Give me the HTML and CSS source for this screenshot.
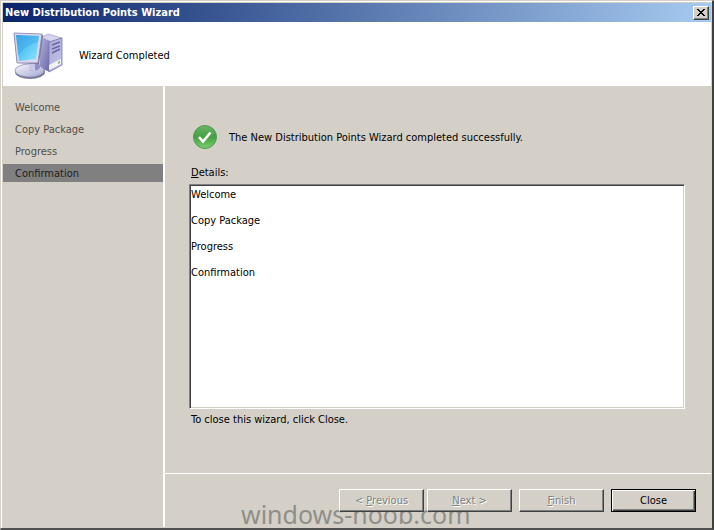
FILE: index.html
```html
<!DOCTYPE html>
<html lang="en">
<head>
<meta charset="utf-8">
<title>New Distribution Points Wizard</title>
<link rel="stylesheet" href="styles.css">
</head>
<body>
<div class="window">
  <div class="titlebar">
    <h1 class="title">New Distribution Points Wizard</h1>
    <button class="close-box" type="button" aria-label="Close window">
      <svg width="8" height="7" viewBox="0 0 8 7" shape-rendering="crispEdges"><path d="M0 0h2v1h1v1h2v-1h1v-1h2v1h-1v1h-1v1h-1v1h1v1h1v1h1v1h-2v-1h-1v-1h-2v1h-1v1h-2v-1h1v-1h1v-1h1v-1h-1v-1h-1v-1h-1z"/></svg>
    </button>
  </div>
  <header class="banner">
    <svg class="computer" width="52" height="50" viewBox="0 0 52 50" aria-hidden="true">
      <defs>
        <linearGradient id="screen" x1="0" y1="0" x2="1" y2="1"><stop offset="0" stop-color="#3fa6e2"/><stop offset=".5" stop-color="#5cc8f4"/><stop offset="1" stop-color="#8ce8ff"/></linearGradient>
        <linearGradient id="side" x1="0" y1="0" x2="1" y2="1"><stop offset="0" stop-color="#b3b3da"/><stop offset="1" stop-color="#6663a8"/></linearGradient>
        <linearGradient id="front" x1="0" y1="0" x2="1" y2="1"><stop offset="0" stop-color="#a9aad9"/><stop offset="1" stop-color="#c3c4e6"/></linearGradient>
        <linearGradient id="base" x1="0" y1="0" x2="1" y2="1"><stop offset="0" stop-color="#f7f7ff"/><stop offset="1" stop-color="#a5a5d1"/></linearGradient>
      </defs>
      <path d="M29 6l6-3 14 4-12 4z" fill="#d5d6ec" stroke="#8e8fbc" stroke-width=".6"/>
      <path d="M27 6l10 4v31l-10-4z" fill="url(#side)"/>
      <path d="M36 11l13-4v27l-13 7z" fill="url(#front)" stroke="#7776ae" stroke-width=".8"/>
      <path d="M39 14l8-3M39 18l8-3M39 22l8-4" stroke="#6865aa" stroke-width="1.500"/>
      <path d="M36 34l12-6v5l-12 6z" fill="#f1f2fc"/>
      <path d="M45 31l2-1v2l-2 1z" fill="#7fb35d"/>
      <ellipse cx="17" cy="41" rx="15" ry="7" fill="#77769f"/>
      <ellipse cx="16.500" cy="39.500" rx="14.500" ry="6.500" fill="url(#base)" stroke="#9392bb" stroke-width=".8"/>
      <path d="M16 28l10-1 1 10q-5 5-11 2z" fill="#8f8dca"/>
      <path d="M16 28l6-1v13q-3 0-6-1z" fill="#c8c8ea"/>
      <path d="M1 3L29 3l1 2-4 28L4 32z" fill="#77749c"/>
      <path d="M1 2L29 3l-4 29L4 32z" fill="#d8d9ec" stroke="#8583ae" stroke-width=".8"/>
      <path d="M3 4L26 5l-3 23L6 30z" fill="url(#screen)"/>
      <path d="M3 4L26 5l-1 6Q12 14 5 25z" fill="#2d99e5" opacity=".3"/>
    </svg>
    <h2 class="banner-title">Wizard Completed</h2>
  </header>
  <div class="body">
    <nav class="steps">
      <ol class="step-list">
        <li class="step">Welcome</li>
        <li class="step">Copy Package</li>
        <li class="step">Progress</li>
        <li class="step current" aria-current="step">Confirmation</li>
      </ol>
    </nav>
    <div class="panel">
      <main class="content">
        <div class="status">
          <svg width="26" height="26" viewBox="0 0 26 26" aria-hidden="true">
            <defs><linearGradient id="green" x1="0" y1="0" x2="0" y2="1"><stop offset="0" stop-color="#6bb568"/><stop offset=".5" stop-color="#459f44"/><stop offset="1" stop-color="#7fce72"/></linearGradient></defs>
            <circle cx="13" cy="13" r="11.500" fill="url(#green)" stroke="#4d9a50"/>
            <path d="M7 13l4 4.500 7.500-9" fill="none" stroke="#fff" stroke-width="2.600"/>
          </svg>
          <p>The New Distribution Points Wizard completed successfully.</p>
        </div>
        <label class="details-label" for="details"><u>D</u>etails:</label>
        <textarea class="details" id="details" readonly>Welcome

Copy Package

Progress

Confirmation</textarea>
        <p class="hint">To close this wizard, click Close.</p>
      </main>
      <footer class="actions">
        <button class="button" type="button" disabled>&lt; <u>P</u>revious</button>
        <button class="button" type="button" disabled><u>N</u>ext &gt;</button>
        <button class="button finish" type="button" disabled><u>F</u>inish</button>
        <button class="button default" type="button">Close</button>
      </footer>
    </div>
  </div>
  <div class="watermark">windows-noob.com</div>
</div>
</body>
</html>
```
FILE: styles.css
```css
* { box-sizing: border-box; }

body, h1, h2, p, ol { margin: 0; padding: 0; }

body {
  font: 11px/13px "DejaVu Sans Condensed", "DejaVu Sans", sans-serif;
  font-stretch: condensed;
  color: #000;
}

button, textarea { font: inherit; color: inherit; }

u { text-underline-offset: 1px; }

.window {
  position: relative;
  display: flex;
  flex-direction: column;
  min-height: 100vh;
  padding: 1px;
  background: #d4d0c8;
  border: 1px solid #d4d0c8;
  border-right: 2px solid #404040;
  border-bottom: 2px solid #505050;
  box-shadow: inset 1px 1px #fff;
}

.titlebar {
  display: flex;
  align-items: center;
  justify-content: space-between;
  height: 19px;
  margin: 1px 0 0 1px;
  padding: 0 2px;
  background: linear-gradient(to right, #0a246a, #a6caf0);
}

.title {
  color: #fff;
  font-size: 11px;
  line-height: 18px;
}

.close-box {
  display: grid;
  place-items: center;
  width: 16px;
  height: 14px;
  padding: 0;
  background: #d4d0c8;
  border: 1px solid;
  border-color: #fff #404040 #404040 #fff;
  box-shadow: inset -1px -1px #808080;
}

.banner {
  display: flex;
  align-items: center;
  gap: 14px;
  height: 64px;
  margin-left: 1px;
  padding: 4px 10px 0;
  background: #fff;
}

.banner-title {
  padding-bottom: 2px;
  font-size: 11px;
  font-weight: normal;
}

.body { display: flex; flex: 1; margin-left: 1px; }

.steps {
  flex: 0 0 162px;
  padding-top: 12px;
  border-right: 2px solid #fff;
}

.step-list {
  display: flex;
  flex-direction: column;
  gap: 4px;
  list-style: none;
}

.step {
  padding: 0 12px;
  color: #504e49;
  line-height: 20px;
  height: 18px;
}

.current { background: #808080; color: #1c1c1c; }

.panel {
  display: flex;
  flex: 1;
  flex-direction: column;
  min-width: 0;
}

.content {
  display: flex;
  flex: 1;
  flex-direction: column;
  padding: 38px 26px 47px 24px;
}

.status {
  display: flex;
  align-items: center;
  gap: 11px;
  padding-left: 3px;
}

.details-label { margin: 16px 2px 5px; }

.details {
  flex: 1;
  padding: 3px 1px;
  background: #fff;
  border: 1px solid;
  border-color: #808080 #fff #fff #808080;
  outline: none;
  box-shadow: inset 1px 1px #404040, inset -1px -1px #d4d0c8;
  resize: none;
}

.hint { margin: 4px 2px 0; }

.actions {
  display: flex;
  justify-content: flex-end;
  padding: 15px 15px 15px 0;
  border-top: 1px solid #fff;
}

.button {
  position: relative;
  z-index: 1;
  width: 85px;
  height: 23px;
  margin-left: 3px;
  padding: 0;
  background: #d4d0c8;
  border: 1px solid;
  border-color: #fff #404040 #404040 #fff;
  box-shadow: inset -1px -1px #808080;
}

.button:disabled { color: #808080; text-shadow: 1px 1px #fff; }

.finish, .default { margin-left: 7px; }

.default {
  border-color: #000;
  box-shadow: inset 1px 1px #fff, inset -1px -1px #404040, inset -2px -2px #808080;
}

.watermark {
  position: absolute;
  bottom: -2px;
  left: 240px;
  color: #908e89;
  font: 25px/32px "Noto Sans", sans-serif;
  pointer-events: none;
}
```
